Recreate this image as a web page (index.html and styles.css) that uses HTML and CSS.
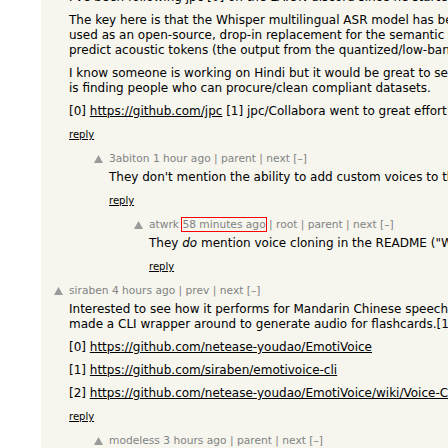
FILE: index.html
```html
<!DOCTYPE html>
<html>
<head>
<meta charset="utf-8">
<link rel="stylesheet" href="styles.css">
</head>
<body>
<div class="page">
  <div class="comment">
    <div class="vote"></div>
    <div class="body">
      <div class="commtext">
        <p>I've been following jpc [0] on the LAION discord since he started building this last year, and it's a very impressive project.</p>
        <p>The key here is that the Whisper multilingual ASR model has been trained on a huge amount of data, so its encoder output<br>used as an open-source, drop-in replacement for the semantic tokens that were used in the original model, and then used to<br>predict acoustic tokens (the output from the quantized/low-bandwidth Encodec audio codec) which are then upsampled</p>
        <p>I know someone is working on Hindi but it would be great to see this extended to other languages. The main bottleneck<br>is finding people who can procure/clean compliant datasets.</p>
        <p>[0] <a href="#">https://github.com/jpc</a> [1] jpc/Collabora went to great effort to make sure the datasets were clean</p>
      </div>
      <div class="reply"><a href="#">reply</a></div>
    </div>
  </div>

  <div class="comment lvl1">
    <div class="vote"><svg class="arrow" viewBox="0 0 9 8" width="9" height="8"><polygon points="0,8 4.5,0 9,8"/></svg></div>
    <div class="body">
      <div class="comhead"><a href="#">3abiton</a> <a href="#">1 hour ago</a> | <a href="#">parent</a> | <a href="#">next</a> [–]</div>
      <div class="commtext">
        <p>They don't mention the ability to add custom voices to the speech output, which is a shame.</p>
      </div>
      <div class="reply"><a href="#">reply</a></div>
    </div>
  </div>

  <div class="comment lvl2">
    <div class="vote"><svg class="arrow" viewBox="0 0 9 8" width="9" height="8"><polygon points="0,8 4.5,0 9,8"/></svg></div>
    <div class="body">
      <div class="comhead"><a href="#">atwrk</a> <a href="#" class="hl">58 minutes ago</a> | <a href="#">root</a> | <a href="#">parent</a> | <a href="#">next</a> [–]</div>
      <div class="commtext">
        <p>They <i>do</i> mention voice cloning in the README ("We have released the voice cloning code").</p>
      </div>
      <div class="reply"><a href="#">reply</a></div>
    </div>
  </div>

  <div class="comment">
    <div class="vote"><svg class="arrow" viewBox="0 0 9 8" width="9" height="8"><polygon points="0,8 4.5,0 9,8"/></svg></div>
    <div class="body">
      <div class="comhead"><a href="#">siraben</a> <a href="#">4 hours ago</a> | <a href="#">prev</a> | <a href="#">next</a> [–]</div>
      <div class="commtext">
        <p>Interested to see how it performs for Mandarin Chinese speech synthesis, especially with prosody and emotion. I recently<br>made a CLI wrapper around to generate audio for flashcards.[1] EmotiVoice [0] for Chinese TTS.</p>
        <p>[0] <a href="#">https://github.com/netease-youdao/EmotiVoice</a></p>
        <p>[1] <a href="#">https://github.com/siraben/emotivoice-cli</a></p>
        <p>[2] <a href="#">https://github.com/netease-youdao/EmotiVoice/wiki/Voice-Cloning-with-your-personal-data</a></p>
      </div>
      <div class="reply"><a href="#">reply</a></div>
    </div>
  </div>

  <div class="comment lvl1">
    <div class="vote"><svg class="arrow" viewBox="0 0 9 8" width="9" height="8"><polygon points="0,8 4.5,0 9,8"/></svg></div>
    <div class="body">
      <div class="comhead"><a href="#">modeless</a> <a href="#">3 hours ago</a> | <a href="#">parent</a> | <a href="#">next</a> [–]</div>
      <div class="commtext">
        <p>Chinese is one of the supported languages.</p>
      </div>
      <div class="reply"><a href="#">reply</a></div>
    </div>
  </div>
</div>
</body>
</html>
```

FILE: styles.css
```css
html, body {
  margin: 0;
  padding: 0;
  background: #ffffff;
  overflow: hidden;
}

.page {
  margin: -10px 0 0 41px;
  min-height: 480px;
  background: #f6f6ef;
  font-family: "DejaVu Sans", Verdana, sans-serif;
  color: #000;
}

.comment {
  display: flex;
  padding-left: 13px;
  margin-bottom: 9.5px;
}

.comment.lvl1 { padding-left: 53px; }
.comment.lvl2 { padding-left: 93px; }

.vote {
  flex: none;
  width: 15px;
  padding-top: 3px;
}

.arrow {
  display: block;
  fill: #9a9a9a;
}

.body {
  flex: 1;
  min-width: 0;
}

.comhead {
  font-size: 10.667px;
  line-height: 14px;
  color: #828282;
  white-space: nowrap;
}

.comhead a {
  color: #828282;
  text-decoration: none;
}

.comhead a.hl {
  outline: 1px solid #ff0000;
  outline-offset: 0;
}

.comhead + .commtext {
  margin-top: 4.5px;
}

.commtext {
  font-size: 12px;
  line-height: 15px;
  white-space: nowrap;
}

.commtext p {
  margin: 8px 0 0;
}

.commtext p:first-child {
  margin-top: 0;
}

.commtext a {
  color: #000;
  text-decoration: underline;
}

.reply {
  margin-top: 8px;
  font-size: 10px;
  line-height: 15px;
}

.reply a {
  color: #000;
  text-decoration: underline;
}
```
